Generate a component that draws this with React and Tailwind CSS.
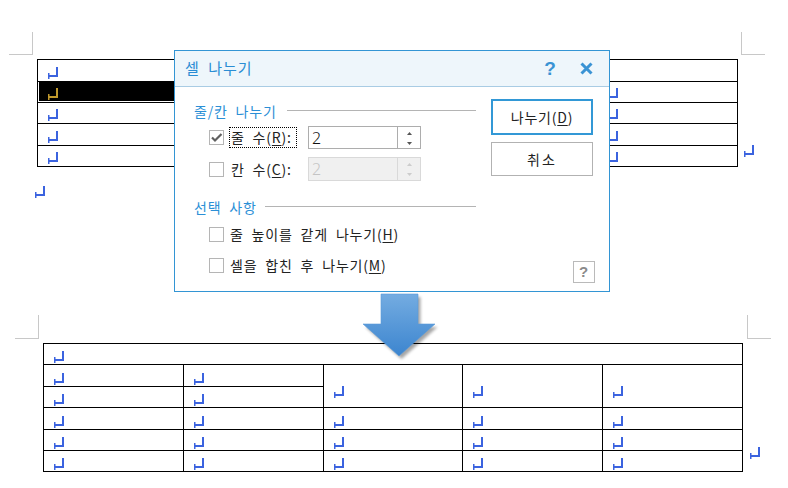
import React from "react";

const BLUE = "#3b63df";

function Mark({ color = BLUE }) {
  return (
    <svg width="12" height="12" viewBox="0 0 12 12" className="block shrink-0">
      <rect x="9" y="0" width="2" height="10" fill={color} />
      <rect x="1" y="8" width="10" height="2" fill={color} />
      <rect x="1" y="6" width="1.5" height="6" fill={color} />
    </svg>
  );
}

// plain table cell: mark sits at the bottom of the line
function Cell({ className = "", pb = "pb-[2px]", selected = false, children }) {
  return (
    <div className={`border-r border-b border-black flex items-end ${className}`}>
      {selected ? (
        <div className="ml-[1px] mb-[1px] self-stretch flex-1 bg-black flex items-end pl-[8px] pb-[1px]">
          <Mark color="#c0992c" />
        </div>
      ) : (
        <div className={`pl-[9px] ${pb}`}>{children === undefined ? <Mark /> : children}</div>
      )}
    </div>
  );
}

function Box({ checked }) {
  return (
    <div className="w-[15px] h-[15px] shrink-0 border border-[#b5b5b5] bg-white flex items-center justify-center">
      {checked && (
        <svg width="13" height="13" viewBox="0 0 13 13">
          <path d="M2 6.5 L5 9.5 L11.5 3" fill="none" stroke="#606060" strokeWidth="2.2" />
        </svg>
      )}
    </div>
  );
}

function Spin({ disabled }) {
  const tri = disabled ? "#cccccc" : "#555555";
  return (
    <div
      className={
        disabled
          ? "w-[113px] h-[24px] flex border border-[#d9d9d9] bg-[#f0f0f0] text-[#c4c4c4]"
          : "w-[113px] h-[23px] flex border border-[#adadad] bg-white text-[#111]"
      }
    >
      <div className="flex-1 pl-[3px] flex items-center text-[16px] font-light tracking-normal font-['Noto_Sans','Liberation_Sans',sans-serif]">
        2
      </div>
      <div
        className={
          disabled
            ? "w-[23px] border-l border-[#d9d9d9] flex items-center justify-center"
            : "w-[23px] border-l border-[#adadad] flex items-center justify-center"
        }
      >
        <svg width="9" height="16" viewBox="0 0 9 16">
          <polygon points="2,5 7,5 4.5,2" fill={tri} />
          <polygon points="2,12 7,12 4.5,15" fill={tri} />
        </svg>
      </div>
    </div>
  );
}

function U({ children }) {
  return <span className="underline underline-offset-[2px] decoration-1">{children}</span>;
}

function GroupTitle({ children, gap }) {
  return (
    <div className="h-[20px] flex items-center">
      <span className="text-[14px] leading-[20px] text-[#2b8fd6] [word-spacing:4px] tracking-[0.8px] whitespace-nowrap">
        {children}
      </span>
      <div className={`flex-1 h-px bg-[#b4b4b4] mb-[1px] ${gap}`} />
    </div>
  );
}

function Dialog() {
  return (
    <div className="absolute left-[174px] top-[50px] w-[436px] h-[242px] border border-[#3395d4] bg-white flex flex-col">
      {/* title bar */}
      <div className="h-[36px] shrink-0 bg-[#eef6fb] border-b border-[#a9cce4] flex items-center pl-[10px] pr-[16px]">
        <span className="text-[15px] text-[#2a8dd4] [word-spacing:4px] tracking-[1px]">셀 나누기</span>
        <span className="ml-auto w-[12px] text-center text-[19px] leading-none font-bold text-[#3a93d4] font-['Liberation_Sans',sans-serif]">
          ?
        </span>
        <svg width="13" height="13" viewBox="0 0 13 13" className="ml-[24px]">
          <path d="M1.5 1.5 L11.5 11.5 M11.5 1.5 L1.5 11.5" stroke="#3a93d4" strokeWidth="3" />
        </svg>
      </div>

      {/* body */}
      <div className="flex-1 flex pl-[19px]">
        <div className="w-[282px] pt-[14px] flex flex-col text-[14px] text-[#222] [word-spacing:4px] tracking-[0.8px]">
          <GroupTitle gap="ml-[10px]">줄/칸 나누기</GroupTitle>

          <div className="mt-[5px] h-[23px] flex items-center pl-[15px]">
            <Box checked />
            <div className="ml-[5px] w-[79px]">
              <div className="w-[68px] h-[21px] border border-dotted border-black flex items-center pl-[1px] whitespace-nowrap">
                줄 수(<U>R</U>):
              </div>
            </div>
            <Spin />
          </div>

          <div className="mt-[8px] h-[24px] flex items-center pl-[15px]">
            <Box />
            <div className="ml-[5px] w-[79px] pl-[2px] whitespace-nowrap">
              칸 수(<U>C</U>):
            </div>
            <Spin disabled />
          </div>

          <div className="mt-[16px]">
            <GroupTitle gap="ml-[8px]">선택 사항</GroupTitle>
          </div>

          <div className="mt-[7px] h-[21px] flex items-center pl-[15px]">
            <Box />
            <span className="ml-[6px] whitespace-nowrap">
              줄 높이를 같게 나누기(<U>H</U>)
            </span>
          </div>

          <div className="mt-[10px] h-[21px] flex items-center pl-[15px]">
            <Box />
            <span className="ml-[6px] whitespace-nowrap">
              셀을 합친 후 나누기(<U>M</U>)
            </span>
          </div>
        </div>

        <div className="ml-[15px] w-[102px] pt-[12px] pb-[8px] flex flex-col text-[14px] text-[#222] tracking-[0.8px]">
          <div className="h-[36px] border-2 border-[#3298d6] flex items-center justify-center">
            나누기(<U>D</U>)
          </div>
          <div className="mt-[7px] h-[34px] border border-[#b2b2b2] flex items-center justify-center tracking-[2px]">
            취소
          </div>
          <div className="mt-auto self-end -mr-[2px] w-[22px] h-[22px] border border-[#bababa] flex items-center justify-center text-[15px] font-bold text-[#8a8a8a] font-['Liberation_Sans',sans-serif]">
            ?
          </div>
        </div>
      </div>
    </div>
  );
}

function Arrow() {
  const pts = "23,4 60,4 60,34 77,34 41,66 5,34 23,34";
  return (
    <svg width="86" height="76" viewBox="0 0 86 76" className="absolute left-[358px] top-[290px]">
      <defs>
        <linearGradient id="arr" x1="0" y1="0" x2="0" y2="1">
          <stop offset="0" stopColor="#74ace1" />
          <stop offset="1" stopColor="#3c85cf" />
        </linearGradient>
        <filter id="sh" x="-20%" y="-20%" width="140%" height="140%">
          <feGaussianBlur stdDeviation="1.6" />
        </filter>
      </defs>
      <polygon points={pts} fill="#000" opacity="0.35" transform="translate(2.5 3)" filter="url(#sh)" />
      <polygon points={pts} fill="url(#arr)" stroke="#5b9ad8" strokeWidth="0.6" />
    </svg>
  );
}

function TopTable() {
  return (
    <div className="grid grid-cols-[140px_140px_140px_140px_140px] grid-rows-[22px_21px_21px_22px_21px] border-l border-t border-black">
      <Cell className="col-span-5" />
      <Cell selected />
      <Cell selected />
      <Cell />
      <Cell />
      <Cell />
      {Array.from({ length: 15 }).map((_, i) => (
        <Cell key={i} />
      ))}
    </div>
  );
}

function BottomTable() {
  return (
    <div className="grid grid-cols-[140px_140px_139px_140px_140px] grid-rows-[21px_22px_21px_22px_21px_21px] border-l border-t border-black">
      <Cell className="col-span-5" pb="pb-[1px]" />
      <Cell className="col-start-1 row-start-2" pb="pb-[1px]" />
      <Cell className="col-start-2 row-start-2" pb="pb-[1px]" />
      {[3, 4, 5].map((c) => (
        <div
          key={c}
          className={`row-start-2 row-span-2 border-r border-b border-black flex items-center ${
            c === 3 ? "col-start-3" : c === 4 ? "col-start-4" : "col-start-5"
          }`}
        >
          <div className="h-[20px] pt-[3px] pl-[9px] mt-[5px] flex items-end pb-[1px]">
            <Mark />
          </div>
        </div>
      ))}
      <Cell className="col-start-1 row-start-3" pb="pb-[1px]" />
      <Cell className="col-start-2 row-start-3" pb="pb-[1px]" />
      {Array.from({ length: 15 }).map((_, i) => (
        <Cell key={i} pb="pb-[1px]" />
      ))}
    </div>
  );
}

export default function App() {
  return (
    <div className="relative w-[788px] h-[488px] overflow-hidden bg-white font-['Noto_Sans_CJK_KR','Liberation_Sans',sans-serif]">
      {/* first page: before */}
      <div className="pt-[32px]">
        <div className="flex h-[23px]">
          <div className="ml-[9px] w-[24px] h-[23px] border-r border-b border-[#c8c8c8]" />
          <div className="ml-auto mr-[23px] w-[24px] h-[23px] border-l border-b border-[#c8c8c8]" />
        </div>
        <div className="mt-[4px] pl-[37px] flex items-end">
          <TopTable />
          <div className="ml-[5px] mb-[10px]">
            <Mark />
          </div>
        </div>
        <div className="mt-[19px] pl-[34px]">
          <Mark />
        </div>
      </div>

      {/* second page: after */}
      <div className="mt-[117px]">
        <div className="flex h-[24px]">
          <div className="ml-[15px] w-[24px] h-[24px] border-r border-b border-[#c8c8c8]" />
          <div className="ml-auto mr-[17px] w-[24px] h-[24px] border-l border-b border-[#c8c8c8]" />
        </div>
        <div className="mt-[4px] pl-[43px] flex items-end">
          <BottomTable />
          <div className="ml-[6px] mb-[13px]">
            <Mark />
          </div>
        </div>
      </div>

      <Dialog />
      <Arrow />
    </div>
  );
}
